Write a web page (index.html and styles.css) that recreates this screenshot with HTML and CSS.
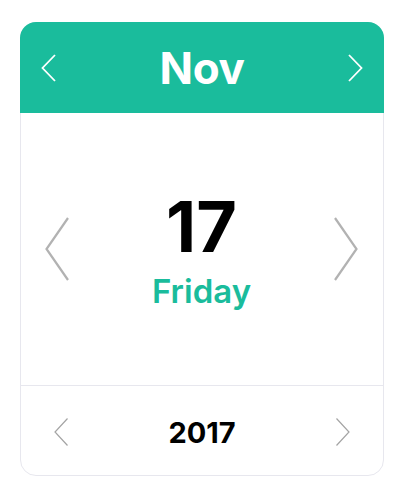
FILE: index.html
```html
<!DOCTYPE html>
<html>
<head>
<meta charset="utf-8">
<link rel="stylesheet" href="styles.css">
</head>
<body>
<div class="card">
  <div class="header">
    <svg class="chev-head" viewBox="0 0 15 28"><polyline points="14,1 1.5,14 14,27"/></svg>
    <div class="month">Nov</div>
    <svg class="chev-head" viewBox="0 0 15 28"><polyline points="1,1 13.5,14 1,27"/></svg>
  </div>
  <div class="day-row">
    <svg class="chev-big" viewBox="0 0 24 64"><polyline points="23,1 1.5,32 23,63"/></svg>
    <div class="day">
      <div class="date">17</div>
      <div class="weekday">Friday</div>
    </div>
    <svg class="chev-big" viewBox="0 0 24 64"><polyline points="1,1 22.5,32 1,63"/></svg>
  </div>
  <div class="year-row">
    <svg class="chev-small" viewBox="0 0 14 28"><polyline points="13.5,0.5 1,14 13.5,27.5"/></svg>
    <div class="year">2017</div>
    <svg class="chev-small" viewBox="0 0 14 28"><polyline points="0.5,0.5 13,14 0.5,27.5"/></svg>
  </div>
</div>
</body>
</html>
```
FILE: styles.css
```css
html, body {
  margin: 0;
  padding: 0;
  background: #ffffff;
}
body {
  font-family: Inter, "Noto Sans", sans-serif;
}
.card {
  box-sizing: border-box;
  margin: 22px 0 0 20px;
  width: 364px;
  height: 454px;
  border: 1px solid #e7e7ee;
  border-radius: 16px;
  display: flex;
  flex-direction: column;
}
.header {
  margin: -1px -1px 0;
  height: 91px;
  background: #1abc9c;
  border-radius: 16px 16px 0 0;
  display: flex;
  align-items: center;
  justify-content: space-between;
  padding: 0 21px;
}
.month {
  color: #ffffff;
  font-size: 44px;
  font-weight: 700;
  line-height: 1;
  letter-spacing: -0.3px;
}
.chev-head {
  width: 15px;
  height: 28px;
  fill: none;
  stroke: #ffffff;
  stroke-width: 1.8;
}
.day-row {
  height: 272px;
  display: flex;
  align-items: center;
  justify-content: space-between;
  padding: 0 25px 0 24px;
}
.chev-big {
  width: 24px;
  height: 64px;
  fill: none;
  stroke: #b2b2b2;
  stroke-width: 2.2;
}
.day {
  display: flex;
  flex-direction: column;
  align-items: center;
  gap: 13px;
  padding-top: 1px;
}
.date {
  font-size: 70px;
  font-weight: 700;
  line-height: 1;
  color: #000000;
  letter-spacing: 0;
}
.weekday {
  font-size: 33px;
  font-weight: 600;
  line-height: 1;
  color: #1abc9c;
}
.year-row {
  flex: 1;
  border-top: 1px solid #e7e7ee;
  display: flex;
  align-items: center;
  justify-content: space-between;
  padding: 2px 33px 0 33px;
}
.year {
  font-size: 29px;
  font-weight: 700;
  line-height: 1;
  color: #000000;
  padding-top: 2px;
}
.chev-small {
  width: 14px;
  height: 28px;
  fill: none;
  stroke: #a4a4a4;
  stroke-width: 1.2;
}
```
